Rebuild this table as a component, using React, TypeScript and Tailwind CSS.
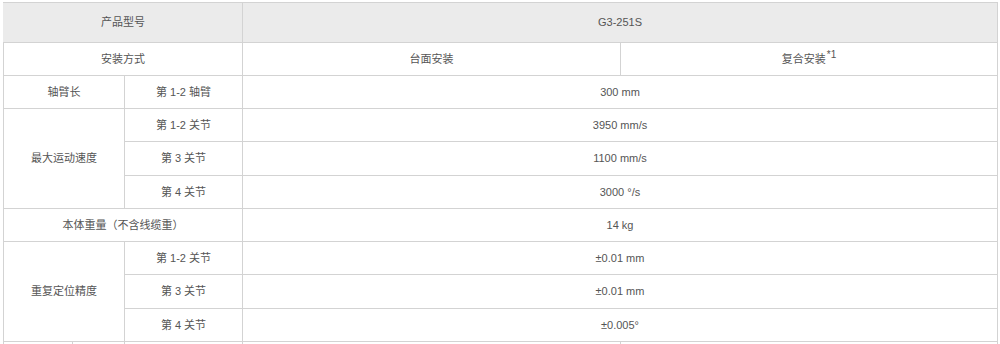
const cell = 'border border-[#d3d3d3] text-center align-middle p-0 font-normal'

interface SpecRow {
  label: string
  sub: string
  value: string
  h: string
}

const SPEED: SpecRow[] = [
  { label: '最大运动速度', sub: '第 1-2 关节', value: '3950 mm/s', h: 'h-[33px]' },
  { label: '', sub: '第 3 关节', value: '1100 mm/s', h: 'h-[34px]' },
  { label: '', sub: '第 4 关节', value: '3000 °/s', h: 'h-[33px]' },
]

const REPEAT: SpecRow[] = [
  { label: '重复定位精度', sub: '第 1-2 关节', value: '±0.01 mm', h: 'h-[33px]' },
  { label: '', sub: '第 3 关节', value: '±0.01 mm', h: 'h-[34px]' },
  { label: '', sub: '第 4 关节', value: '±0.005°', h: 'h-[33px]' },
]

function Group({ rows }: { rows: SpecRow[] }) {
  return (
    <>
      {rows.map((r, i) => (
        <tr key={r.sub} className={r.h}>
          {i === 0 && (
            <td colSpan={2} rowSpan={rows.length} className={cell}>
              {r.label}
            </td>
          )}
          <td className={cell}>{r.sub}</td>
          <td colSpan={2} className={cell}>
            {r.value}
          </td>
        </tr>
      ))}
    </>
  )
}

export default function App() {
  return (
    <div className="w-[1000px] h-[344px] overflow-hidden bg-white pt-[2px] pl-[3px]">
      <table
        className="table-fixed border-collapse w-[994px] text-[11px] leading-none text-[#555]"
        style={{ fontFamily: '"Liberation Sans", Arial, "Noto Sans CJK SC", sans-serif' }}
      >
        <colgroup>
          <col className="w-[69px]" />
          <col className="w-[52px]" />
          <col className="w-[118px]" />
          <col className="w-[378px]" />
          <col className="w-[377px]" />
        </colgroup>
        <tbody>
          {/* model header */}
          <tr className="h-[40px] bg-[#ebebeb]">
            <th colSpan={3} className={cell + ' border-l-[#ebebeb]'}>
              产品型号
            </th>
            <th colSpan={2} className={cell}>
              G3-251S
            </th>
          </tr>

          {/* mounting */}
          <tr className="h-[33px]">
            <td colSpan={3} className={cell}>
              安装方式
            </td>
            <td className={cell}>台面安装</td>
            <td className={cell}>
              复合安装<sup className="text-[10px] align-baseline relative -top-[5px] ml-[1px]">*1</sup>
            </td>
          </tr>

          <tr className="h-[33px]">
            <td colSpan={2} className={cell}>
              轴臂长
            </td>
            <td className={cell}>第 1-2 轴臂</td>
            <td colSpan={2} className={cell}>
              300 mm
            </td>
          </tr>

          <Group rows={SPEED} />

          <tr className="h-[33px]">
            <td colSpan={3} className={cell}>
              本体重量（不含线缆重）
            </td>
            <td colSpan={2} className={cell}>
              14 kg
            </td>
          </tr>

          <Group rows={REPEAT} />

          {/* next row, only its top edge shows */}
          <tr className="h-[33px]">
            <td className={cell} />
            <td className={cell} />
            <td className={cell} />
            <td className={cell} />
            <td className={cell} />
          </tr>
        </tbody>
      </table>
    </div>
  )
}
